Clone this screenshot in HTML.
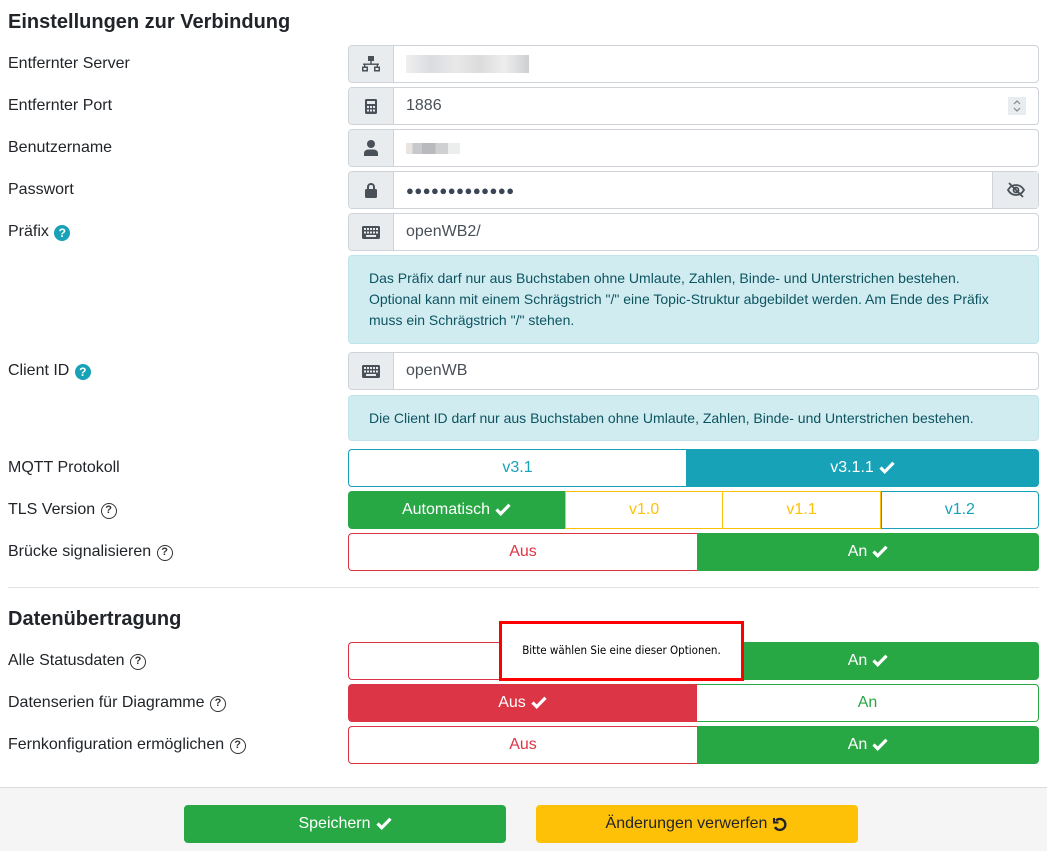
<!DOCTYPE html>
<html><head><meta charset="utf-8"><style>
*{box-sizing:border-box;margin:0;padding:0}
body{width:1047px;height:851px;position:relative;background:#fff;font-family:"Liberation Sans",sans-serif;color:#212529;overflow:hidden}
.a{position:absolute}
h2{position:absolute;left:8px;font-size:20px;font-weight:bold;color:#212529}
.lbl{position:absolute;left:8px;font-size:16px;line-height:20px}
.q{display:inline-block;width:16px;height:16px;border-radius:50%;background:#17a2b8;color:#fff;font-size:12px;font-weight:bold;text-align:center;line-height:16px;vertical-align:-1px;margin-left:1px}
.qo{display:inline-block;width:16px;height:16px;border-radius:50%;border:1.6px solid #333;color:#333;font-size:11px;font-weight:bold;text-align:center;line-height:13px;vertical-align:1px;margin-left:1px}
.inp{position:absolute;left:348px;width:691px;height:38px;border:1px solid #ced4da;border-radius:4px;display:flex;font-size:16px;color:#495057;background:#fff}
.ic{width:45px;background:#e9ecef;border-right:1px solid #ced4da;display:flex;align-items:center;justify-content:center;border-radius:3px 0 0 3px}
.tx{padding-left:12px;display:flex;align-items:center;flex:1}
.info{position:absolute;left:348px;width:691px;background:#d1ecf1;border:1px solid #bee5eb;border-radius:4px;color:#0c5460;font-size:14px;line-height:21px;padding:0 40px 0 20px}
.grp{position:absolute;left:348px;width:691px;height:38px;display:flex;font-size:16px}
.grp div{display:flex;align-items:center;justify-content:center;flex:1}
.ck{display:inline-block;margin-left:5px;width:16px;height:13px;margin-top:-2px}
.btn{position:absolute;top:805px;height:38px;width:322px;border-radius:4px;display:flex;align-items:center;justify-content:center;font-size:16px}
</style></head><body>
<svg width="0" height="0" style="position:absolute"><defs><symbol id="ck" viewBox="0 0 16 13"><path d="M1.5 6.5l4.2 4.2L14.5 1.8" fill="none" stroke="#fff" stroke-width="3.2"/></symbol></defs></svg>
<h2 style="top:11px">Einstellungen zur Verbindung</h2>
<div class="lbl" style="top:54px">Entfernter Server</div>
<div class="lbl" style="top:96px">Entfernter Port</div>
<div class="lbl" style="top:138px">Benutzername</div>
<div class="lbl" style="top:180px">Passwort</div>
<div class="lbl" style="top:222px">Präfix <span class="q">?</span></div>
<div class="lbl" style="top:361px">Client ID <span class="q">?</span></div>
<div class="lbl" style="top:458px">MQTT Protokoll</div>
<div class="lbl" style="top:500px">TLS Version <span class="qo">?</span></div>
<div class="lbl" style="top:542px">Brücke signalisieren <span class="qo">?</span></div>

<div class="inp" style="top:45px"><div class="ic"><svg width="18" height="16" viewBox="0 0 18 16" fill="#495057"><rect x="6" y="0" width="6" height="5"/><rect x="8.3" y="5" width="1.4" height="3"/><rect x="1" y="7.5" width="16" height="1.4"/><rect x="2" y="8" width="1.4" height="3"/><rect x="14.6" y="8" width="1.4" height="3"/><rect x="0" y="10.5" width="6" height="5"/><rect x="12" y="10.5" width="6" height="5"/><rect x="1.5" y="12" width="3" height="2" fill="#e9ecef"/><rect x="13.5" y="12" width="3" height="2" fill="#e9ecef"/></svg></div><div class="tx"><div style="width:123px;height:18px;background:linear-gradient(90deg,#eee,#d6d8dc 20%,#e6e6e6 40%,#d8d8d8 60%,#ececec 80%,#c8c9cc);opacity:.9"></div></div></div>
<div class="inp" style="top:87px"><div class="ic"><svg width="12" height="15" viewBox="0 0 12 15"><rect width="12" height="15" rx="1.5" fill="#495057"/><rect x="2" y="2" width="8" height="3" fill="#e9ecef"/><g fill="#e9ecef"><rect x="2" y="7" width="2" height="2"/><rect x="5" y="7" width="2" height="2"/><rect x="8" y="7" width="2" height="2"/><rect x="2" y="10.5" width="2" height="2"/><rect x="5" y="10.5" width="2" height="2"/><rect x="8" y="10.5" width="2" height="2"/></g></svg></div><div class="tx">1886</div><div class="a" style="right:12px;top:9px;width:18px;height:18px;background:#e9ecef"><svg width="18" height="18" viewBox="0 0 18 18" fill="none" stroke="#888" stroke-width="1.2"><path d="M6 7l3-3 3 3M6 11l3 3 3-3"/></svg></div></div>
<div class="inp" style="top:129px"><div class="ic"><svg width="14" height="16" viewBox="0 0 14 16" fill="#495057"><circle cx="7" cy="4" r="4"/><path d="M0 16v-2.5C0 11 2 9.5 4.5 9.5h5C12 9.5 14 11 14 13.5V16z"/></svg></div><div class="tx"><div style="width:54px;height:11px;background:linear-gradient(90deg,#e8e4e2 0 12%,#c7c9cc 12% 30%,#b8babd 30% 55%,#cfd0d2 55% 78%,#eceded 78%)"></div></div></div>
<div class="inp" style="top:171px"><div class="ic"><svg width="14" height="16" viewBox="0 0 14 16" fill="#495057"><path d="M3 7V5a4 4 0 0 1 8 0v2h-2V5a2 2 0 0 0-4 0v2z"/><rect x="1" y="7" width="12" height="9" rx="1.5"/></svg></div><div class="tx" style="font-size:13px;letter-spacing:0.5px;color:#3a4656">●●●●●●●●●●●●●</div><div style="width:46px;background:#e9ecef;border-left:1px solid #ced4da;display:flex;align-items:center;justify-content:center"><svg width="20" height="16" viewBox="0 0 20 16" fill="none" stroke="#495057" stroke-width="1.8"><path d="M2 8c2-3.5 5-5 8-5s6 1.5 8 5c-2 3.5-5 5-8 5s-6-1.5-8-5z"/><circle cx="10" cy="8" r="2.5"/><path d="M3 1l14 14"/></svg></div></div>
<div class="inp" style="top:213px"><div class="ic"><svg width="18" height="13" viewBox="0 0 18 13"><rect width="18" height="13" rx="1.5" fill="#495057"/><g fill="#e9ecef"><rect x="2" y="2" width="2" height="2"/><rect x="5" y="2" width="2" height="2"/><rect x="8" y="2" width="2" height="2"/><rect x="11" y="2" width="2" height="2"/><rect x="14" y="2" width="2" height="2"/><rect x="2" y="5.5" width="2" height="2"/><rect x="5" y="5.5" width="2" height="2"/><rect x="8" y="5.5" width="2" height="2"/><rect x="11" y="5.5" width="2" height="2"/><rect x="14" y="5.5" width="2" height="2"/><rect x="4" y="9" width="10" height="2"/></g></svg></div><div class="tx">openWB2/</div></div>
<div class="info" style="top:255px;height:89px;padding-top:12px">Das Präfix darf nur aus Buchstaben ohne Umlaute, Zahlen, Binde- und Unterstrichen bestehen. Optional kann mit einem Schrägstrich "/" eine Topic-Struktur abgebildet werden. Am Ende des Präfix muss ein Schrägstrich "/" stehen.</div>
<div class="inp" style="top:352px"><div class="ic"><svg width="18" height="13" viewBox="0 0 18 13"><rect width="18" height="13" rx="1.5" fill="#495057"/><g fill="#e9ecef"><rect x="2" y="2" width="2" height="2"/><rect x="5" y="2" width="2" height="2"/><rect x="8" y="2" width="2" height="2"/><rect x="11" y="2" width="2" height="2"/><rect x="14" y="2" width="2" height="2"/><rect x="2" y="5.5" width="2" height="2"/><rect x="5" y="5.5" width="2" height="2"/><rect x="8" y="5.5" width="2" height="2"/><rect x="11" y="5.5" width="2" height="2"/><rect x="14" y="5.5" width="2" height="2"/><rect x="4" y="9" width="10" height="2"/></g></svg></div><div class="tx">openWB</div></div>
<div class="info" style="top:395px;height:46px;padding-top:12px">Die Client ID darf nur aus Buchstaben ohne Umlaute, Zahlen, Binde- und Unterstrichen bestehen.</div>

<div class="grp" style="top:449px"><div style="border:1px solid #17a2b8;border-right:none;border-radius:4px 0 0 4px;color:#17a2b8;flex:0 0 338px">v3.1</div><div style="background:#17a2b8;color:#fff;border-radius:0 4px 4px 0">v3.1.1<svg class="ck"><use href="#ck"/></svg></div></div>
<div class="grp" style="top:491px"><div style="background:#28a745;color:#fff;border-radius:4px 0 0 4px;flex:0 0 217px">Automatisch<svg class="ck"><use href="#ck"/></svg></div><div style="border:1px solid #ffc107;color:#ffc107">v1.0</div><div style="border:1px solid #ffc107;border-left:none;color:#ffc107">v1.1</div><div style="border:1px solid #17a2b8;color:#17a2b8;border-radius:0 4px 4px 0">v1.2</div></div>
<div class="grp" style="top:533px"><div style="border:1px solid #dc3545;border-right:none;color:#dc3545;border-radius:4px 0 0 4px;flex:0 0 349px">Aus</div><div style="background:#28a745;color:#fff;border-radius:0 4px 4px 0">An<svg class="ck"><use href="#ck"/></svg></div></div>

<div class="a" style="left:8px;top:587px;width:1031px;height:1px;background:#e2e2e2"></div>
<h2 style="top:608px">Datenübertragung</h2>
<div class="lbl" style="top:651px">Alle Statusdaten <span class="qo">?</span></div>
<div class="lbl" style="top:693px">Datenserien für Diagramme <span class="qo">?</span></div>
<div class="lbl" style="top:735px">Fernkonfiguration ermöglichen <span class="qo">?</span></div>
<div class="grp" style="top:642px"><div style="border:1px solid #dc3545;border-right:none;color:#dc3545;border-radius:4px 0 0 4px;flex:0 0 349px">Aus</div><div style="background:#28a745;color:#fff;border-radius:0 4px 4px 0">An<svg class="ck"><use href="#ck"/></svg></div></div>
<div class="grp" style="top:684px"><div style="background:#dc3545;color:#fff;border-radius:4px 0 0 4px;flex:0 0 349px">Aus<svg class="ck"><use href="#ck"/></svg></div><div style="border:1px solid #28a745;border-left:none;color:#28a745;border-radius:0 4px 4px 0">An</div></div>
<div class="grp" style="top:726px"><div style="border:1px solid #dc3545;border-right:none;color:#dc3545;border-radius:4px 0 0 4px;flex:0 0 349px">Aus</div><div style="background:#28a745;color:#fff;border-radius:0 4px 4px 0">An<svg class="ck"><use href="#ck"/></svg></div></div>

<div class="a" style="left:499px;top:621px;width:245px;height:60px;border:3px solid #f00;background:#fff;font-size:11.5px;color:#000;text-align:center;padding-top:19px;font-family:'DejaVu Sans Condensed','Liberation Sans',sans-serif">Bitte wählen Sie eine dieser Optionen.</div>

<div class="a" style="left:0;top:787px;width:1047px;height:64px;background:#f5f5f5;border-top:1px solid #dcdcdc"></div>
<div class="btn" style="left:184px;background:#28a745;color:#fff">Speichern<svg class="ck"><use href="#ck"/></svg></div>
<div class="btn" style="left:536px;background:#ffc107;color:#212529">Änderungen verwerfen<svg width="16" height="16" viewBox="0 0 16 16" style="margin-left:5px" fill="none" stroke="#212529" stroke-width="2.4"><path d="M4 4.5A5.5 5.5 0 1 1 3 11"/><path d="M2 2v4.5h4.5" stroke-width="2"/></svg></div>
</body></html>
